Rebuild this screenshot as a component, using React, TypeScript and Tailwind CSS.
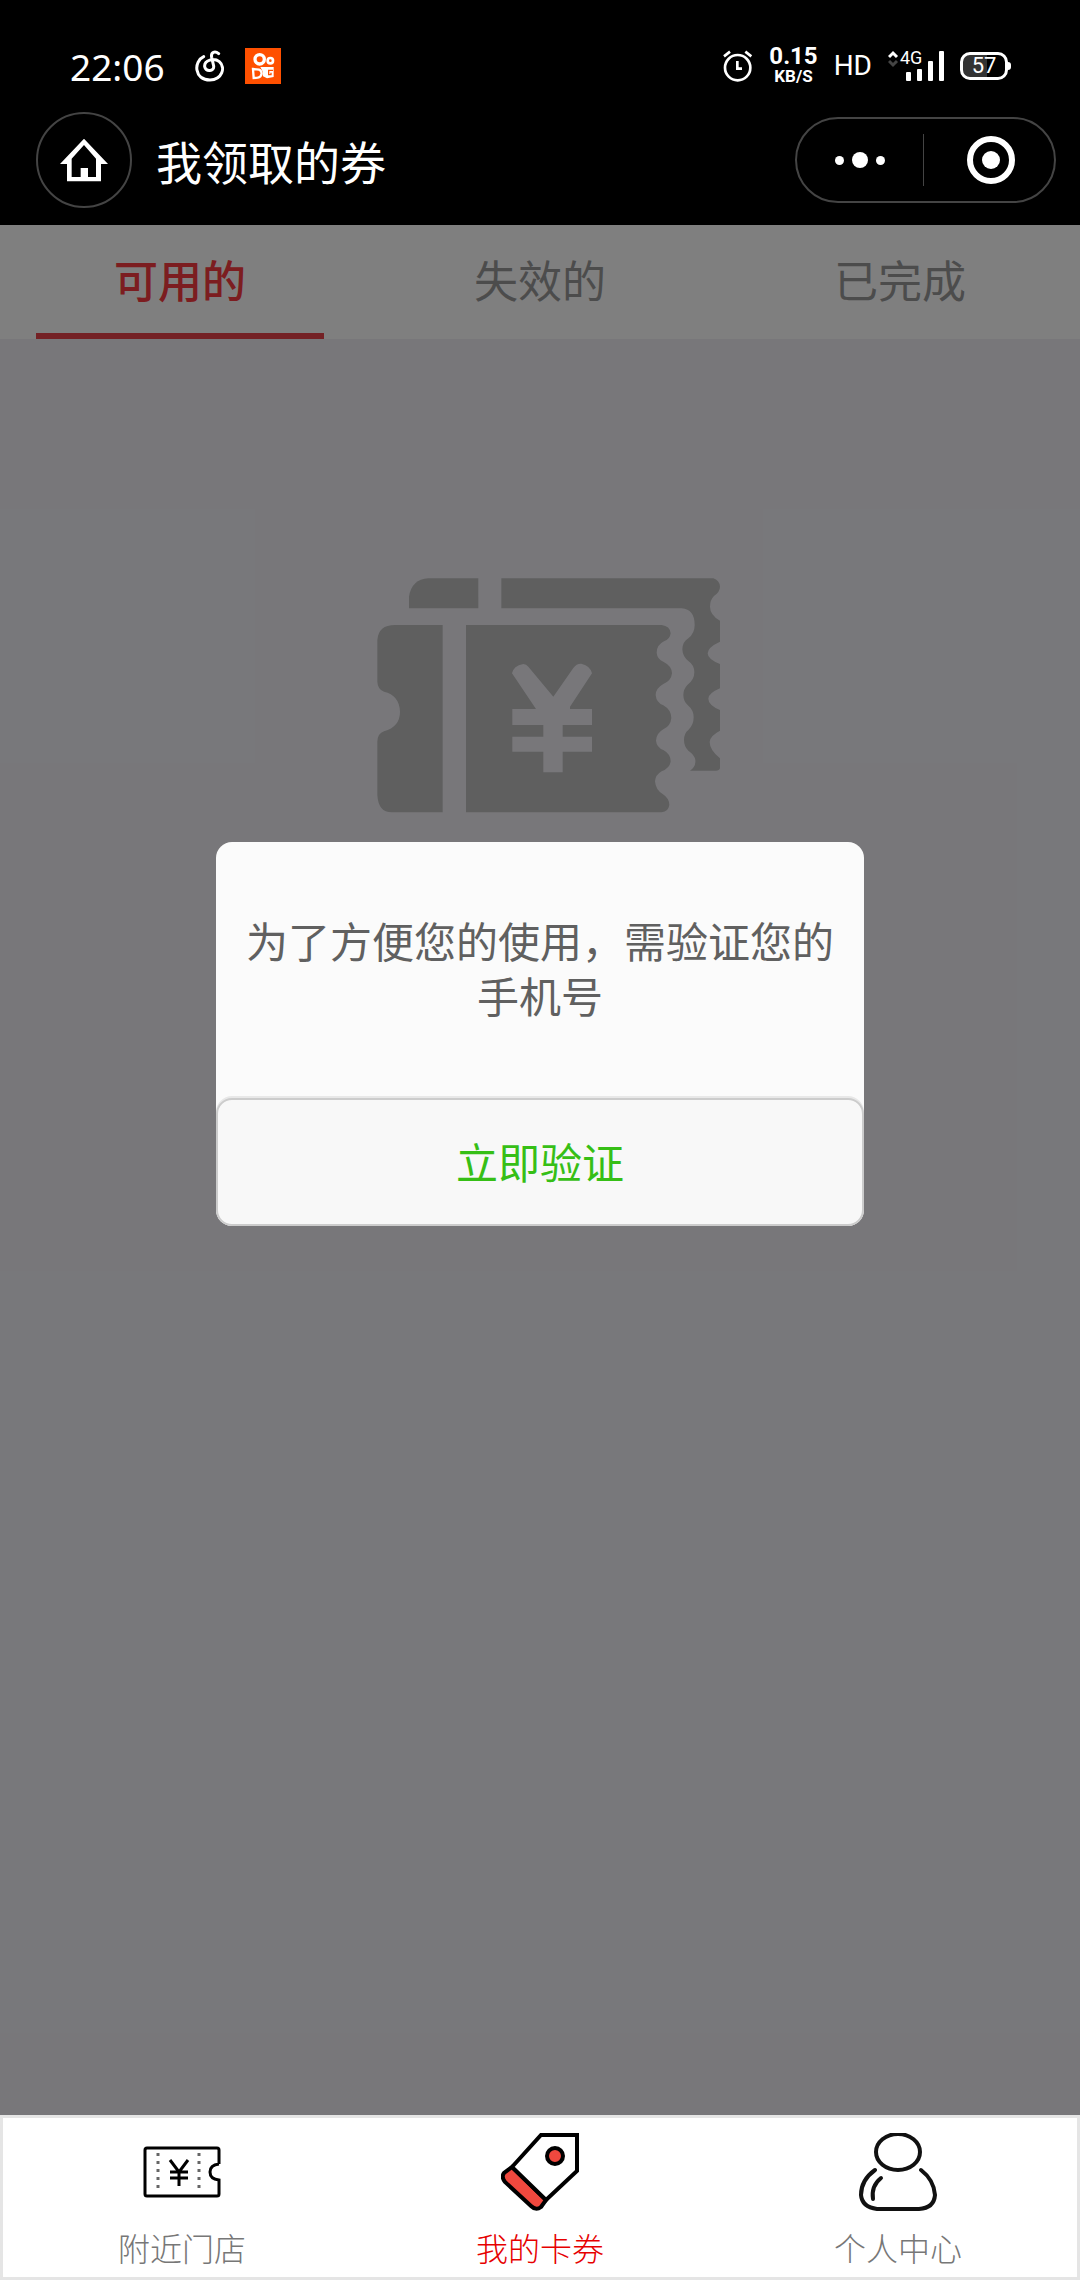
import React, { useState } from "react";

const TABS = ["可用的", "失效的", "已完成"];

const NAV_ITEMS = [
  { label: "附近门店", icon: StoreIcon },
  { label: "我的卡券", icon: TagIcon },
  { label: "个人中心", icon: UserIcon },
];

function MusicIcon() {
  return (
    <svg viewBox="586 62 88 96" className="w-[30px] h-8" fill="none" stroke="#fff" strokeWidth="9" strokeLinecap="round" aria-hidden="true">
      <path d="M611 82 C580 96 582 152 630 152 C666 152 678 114 658 97 C642 85 612 92 614 112 C618 129 643 127 641 110 L635 84 C632 68 645 64 656 73" />
    </svg>
  );
}

function KuaishouIcon() {
  return (
    <svg viewBox="0 0 108 108" className="w-9 h-9" aria-hidden="true">
      <rect width="108" height="108" fill="#ff5000" />
      <circle cx="44" cy="34" r="14" fill="none" stroke="#fff" strokeWidth="10" />
      <circle cx="76" cy="38" r="8" fill="none" stroke="#fff" strokeWidth="8" />
      <path d="M24 63 L42 65 Q50 68 50 77 Q48 87 38 89 L26 90 Z" fill="none" stroke="#fff" strokeWidth="7" />
      <path d="M46 57 H86 V87 L66 91 L54 85 V72 Z" fill="#fff" />
      <path d="M84 67 H71 V80 H78 V74" fill="none" stroke="#ff5000" strokeWidth="4" />
    </svg>
  );
}

function AlarmIcon() {
  return (
    <svg viewBox="76 62 90 96" className="w-[30px] h-8" fill="none" stroke="#fff" aria-hidden="true">
      <circle cx="120" cy="115" r="38" strokeWidth="8" />
      <path d="M79 81 L97 67 M143 67 L161 81" strokeWidth="8" />
      <path d="M119 95 V118 H133" strokeWidth="8" />
    </svg>
  );
}

function SignalBars() {
  return (
    <svg viewBox="0 0 56 32" className="w-14 h-8" aria-hidden="true">
      <path d="M1 7 L5 3 L9 7" fill="none" stroke="#fff" strokeWidth="3" />
      <path d="M1 11 L5 15 L9 11" fill="none" stroke="#444" strokeWidth="3" />
      <g fill="#fff">
        <rect x="18" y="22" width="5" height="9" rx="1" />
        <rect x="29" y="19" width="5" height="12" rx="1" />
        <rect x="40" y="11" width="5" height="20" rx="1" />
        <rect x="51" y="1" width="5" height="30" rx="1" />
      </g>
    </svg>
  );
}

function HomeIcon() {
  return (
    <svg viewBox="180 324 144 132" className="w-12 h-11" aria-hidden="true">
      <path
        d="M252 326 L324 402 H303 V454 H201 V402 H180 Z M252 345 L215 386 V441 H242 V414 H264 V441 H288 V386 Z"
        fill="#fff"
        fillRule="evenodd"
      />
    </svg>
  );
}

function CouponArt() {
  return (
    <svg viewBox="0 0 1080 810" className="w-[360px] h-[270px]" fill="#bebebe" aria-hidden="true">
      {/* Back coupon */}
      <path d="M147 145 V110 Q155 58 205 55 H355 V145 Z" />
      <path d="M424 55 H1060 Q1078 60 1080 80 Q1080 95 1062 108 Q1050 120 1050 140 Q1050 165 1080 182 V245 Q1043 262 1043 280 Q1043 298 1080 312 V385 Q1045 400 1045 416 Q1045 435 1080 450 V512 Q1049 528 1049 546 Q1049 570 1080 595 V625 Q1078 632 1068 632 H990 Q1008 620 1006 600 Q1004 585 985 572 Q972 560 972 540 Q972 520 985 510 Q1001 495 1001 472 Q1001 450 985 437 Q970 425 970 405 Q970 388 982 375 Q1003 360 1003 337 Q1003 315 985 303 Q968 290 967 268 Q968 245 985 235 Q1004 220 1004 195 Q1004 148 965 145 H424 Z" />
      {/* Front coupon */}
      <path d="M52 240 Q55 195 105 195 H248 V757 H95 Q55 757 52 705 V545 Q53 520 72 514 Q120 500 120 455 Q118 405 72 395 Q53 388 52 365 Z" />
      <path d="M318 195 H905 Q930 198 932 220 Q930 238 912 244 Q890 255 890 278 Q892 298 910 305 Q936 318 936 340 Q934 362 910 372 Q887 385 887 405 Q889 428 910 436 Q934 450 934 474 Q932 498 910 508 Q889 520 888 542 Q890 562 910 570 Q932 582 932 604 Q930 624 905 634 Q886 645 885 664 Q887 690 908 702 Q928 715 928 735 Q925 755 905 757 H318 Z" />
      <g fill="#f0eff5">
        <path d="M456 340 Q460 318 490 312 Q499 312 505 320 L580 410 L640 324 Q650 310 664 311 Q692 318 696 340 L630 440 V447 H696 V495 H608 V530 H696 V575 H608 V637 H550 V575 H457 V530 H550 V495 H457 V447 H528 Z" />
      </g>
    </svg>
  );
}

function StoreIcon() {
  return (
    <svg viewBox="0 0 78 78" className="w-[78px] h-[78px]" fill="none" stroke="#000" aria-hidden="true">
      <path d="M76 31 V17 Q76 15 74 15 H4 Q2 15 2 17 V61 Q2 63 4 63 H74 Q76 63 76 61 V47 Q67 46 67 39 Q67 32 76 31" strokeWidth="3" />
      <path d="M15 20 V60 M56 20 V60" stroke="#666" strokeWidth="3" strokeDasharray="3 5" />
      <path d="M27 27 L36 39 L45 27 M36 39 V53 M27 39 H45 M27 45 H45" strokeWidth="3" />
    </svg>
  );
}

function TagIcon() {
  return (
    <svg viewBox="0 0 78 78" className="w-[78px] h-[78px]" stroke="#000" aria-hidden="true">
      <path d="M11 34 L3 40 Q0 44 4 49 L30 73 Q35 78 40 74 L45 67 Z" fill="#f0483e" strokeWidth="4" />
      <path d="M11 34 L40 2 H76 V38 L45 67 Z" fill="#fff" strokeWidth="4" />
      <circle cx="54" cy="23" r="8" fill="#f0483e" strokeWidth="4" />
    </svg>
  );
}

function UserIcon() {
  return (
    <svg viewBox="0 0 78 78" className="w-[78px] h-[78px]" fill="none" stroke="#111" strokeLinecap="round" aria-hidden="true">
      <ellipse cx="39" cy="19" rx="22" ry="18" strokeWidth="4" />
      <path d="M16 37 Q2 47 2 62 Q3 74 18 76 H60 Q75 75 76 62 Q75 47 62 37" strokeWidth="4" />
      <path d="M22 45 Q12 53 14 66" strokeWidth="4" />
    </svg>
  );
}

function StatusBar() {
  return (
    <div className="flex items-center justify-between h-[92px] pl-[70px] pr-[69px]">
      <div className="flex items-center">
        <span className="text-[37px] leading-none font-['Noto_Sans']">22:06</span>
        <span className="ml-[30px]">
          <MusicIcon />
        </span>
        <span className="ml-5">
          <KuaishouIcon />
        </span>
      </div>
      <div className="flex items-center gap-4 font-[Roboto]">
        <AlarmIcon />
        <p className="text-center text-[24px] leading-[18px] font-bold">
          0.15
          <br />
          <small className="text-[17px]">KB/S</small>
        </p>
        <span className="text-[28px] leading-none">HD</span>
        <div className="relative">
          <SignalBars />
          <span className="absolute left-3 top-0 text-[18px] leading-4">4G</span>
        </div>
        <div className="flex items-center">
          <div className="flex items-center justify-center w-12 h-7 rounded-[10px] border-[3px] border-white bg-linear-to-r from-[#333] from-57% to-black to-57%">
            <span className="text-[22px] leading-none">57</span>
          </div>
          <div className="w-[3px] h-2 rounded-r bg-white" />
        </div>
      </div>
    </div>
  );
}

export default function App() {
  const [tab, setTab] = useState(0);
  const [dialogOpen, setDialogOpen] = useState(true);

  return (
    <div lang="zh-CN" className="min-h-screen flex flex-col bg-[#f0eff5] font-['Noto_Sans_CJK_SC',sans-serif]">
      <header className="bg-black text-white pt-5 pb-[17px]">
        <StatusBar />
        <div className="flex items-center h-24 pl-9 pr-6">
          <button aria-label="首页" className="flex items-center justify-center w-24 h-24 rounded-full border-2 border-[#444]">
            <HomeIcon />
          </button>
          <h1 className="ml-6 text-[46px] leading-none">我领取的券</h1>
          <div className="flex items-center ml-auto w-[261px] h-[86px] rounded-full border-2 border-[#444]">
            <button aria-label="更多" className="flex flex-1 items-center justify-center gap-2 h-full">
              <span className="w-[9px] h-[9px] rounded-full bg-white" />
              <span className="w-4 h-4 rounded-full bg-white" />
              <span className="w-[9px] h-[9px] rounded-full bg-white" />
            </button>
            <span className="w-px h-[52px] bg-[#444]" />
            <button aria-label="关闭" className="flex flex-1 items-center justify-center h-full pl-1">
              <span className="flex items-center justify-center w-12 h-12 rounded-full border-[6px] border-white">
                <span className="w-[18px] h-[18px] rounded-full bg-white" />
              </span>
            </button>
          </div>
        </div>
      </header>

      <main className="relative flex flex-1 flex-col">
        <div role="tablist" className="grid grid-cols-3 bg-white">
          {TABS.map((name, i) => (
            <button
              key={name}
              role="tab"
              aria-selected={tab === i}
              onClick={() => setTab(i)}
              className={
                tab === i
                  ? "flex flex-col items-center text-[44px] leading-[108px] font-medium text-[#f83a40]"
                  : "flex flex-col items-center text-[44px] leading-[108px] text-[#999]"
              }
            >
              {name}
              <span className={tab === i ? "w-4/5 h-[6px] bg-[#e8424a]" : "w-4/5 h-[6px]"} />
            </button>
          ))}
        </div>

        <div className="flex flex-1 justify-center items-start pt-[221px]">
          <CouponArt />
        </div>

        {/* Modal */}
        {dialogOpen && (
          <div className="absolute inset-0 flex justify-center items-start pt-[617px] bg-black/50">
            <div role="dialog" aria-modal="true" className="w-3/5 rounded-2xl bg-[#fbfbfb] text-center">
              <p className="px-6 pt-[70px] pb-[76px] text-[42px] leading-[55px] text-[#606060]">
                为了方便您的使用，需验证您的手机号
              </p>
              <button
                onClick={() => setDialogOpen(false)}
                className="block w-full h-32 pb-1 rounded-2xl border-2 border-[#ccc] bg-[#f8f8f8] text-[42px] text-[#36bf16] shadow-[0_-2px_0_#e8e8e8]"
              >
                立即验证
              </button>
            </div>
          </div>
        )}
      </main>

      <nav className="grid grid-cols-3 border-[3px] border-[#e5e5e5] bg-white pt-[15px] pb-[10px]">
        {NAV_ITEMS.map(({ label, icon: Icon }, i) => (
          <a key={label} href="#" className="flex flex-col items-center gap-4">
            <Icon />
            <span
              className={
                i === 1
                  ? "text-[32px] leading-10 font-light text-[#e60000]"
                  : "text-[32px] leading-10 font-light text-[#777]"
              }
            >
              {label}
            </span>
          </a>
        ))}
      </nav>
    </div>
  );
}
